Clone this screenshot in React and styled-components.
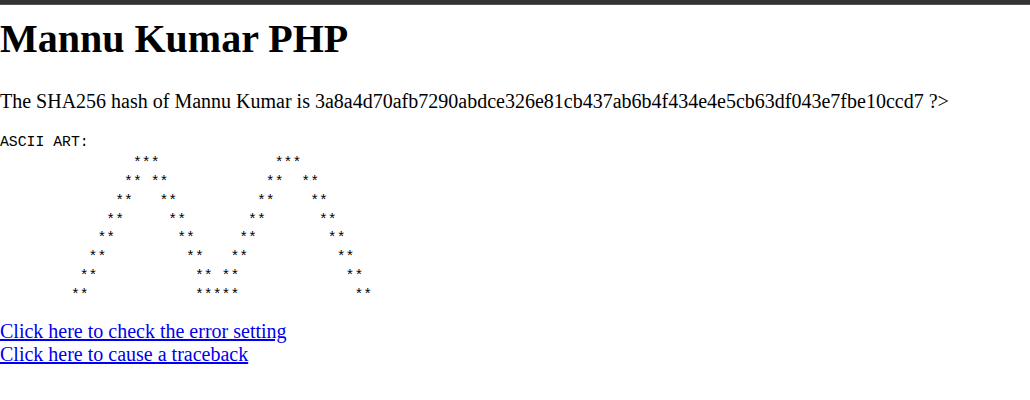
import React from 'react';
import styled, { createGlobalStyle } from 'styled-components';

const GlobalStyle = createGlobalStyle`
  body {
    margin: 0;
    background: #ffffff;
    color: #000000;
    font-family: "Liberation Serif", "Times New Roman", serif;
  }
`;

const TopBar = styled.div`
  height: 5px;
  background: #333333;
  border-bottom: 1px solid #555555;
  box-sizing: border-box;
`;

const Heading = styled.h1`
  margin: 12px 0 0;
  font-size: 40px;
  line-height: 44px;
  font-weight: bold;
`;

const Text = styled.p`
  margin: 29px 0 20px;
  font-size: 20px;
  line-height: 23px;
`;

const Art = styled.pre`
  margin: 20px 0 18px;
  font-family: "Liberation Mono", "Courier New", monospace;
  font-size: 14.77px;
  line-height: 18.8px;
`;

const ArtLabel = styled.span`
  display: block;
`;

const Stars = styled.span`
  display: block;
  padding-top: 2.5px;
  margin-bottom: -2.5px;
`;

const Links = styled.div`
  display: flex;
  flex-direction: column;
  align-items: flex-start;
  font-size: 20px;
  line-height: 23px;
`;

const Link = styled.a`
  color: #0000ee;
  text-decoration: underline;
`;

const sp = (n) => ' '.repeat(n);

const artRows = [
  sp(15) + '***' + sp(13) + '***',
  sp(14) + '**' + sp(1) + '**' + sp(11) + '**' + sp(2) + '**',
  sp(13) + '**' + sp(3) + '**' + sp(9) + '**' + sp(4) + '**',
  sp(12) + '**' + sp(5) + '**' + sp(7) + '**' + sp(6) + '**',
  sp(11) + '**' + sp(7) + '**' + sp(5) + '**' + sp(8) + '**',
  sp(10) + '**' + sp(9) + '**' + sp(3) + '**' + sp(10) + '**',
  sp(9) + '**' + sp(11) + '**' + sp(1) + '**' + sp(12) + '**',
  sp(8) + '**' + sp(12) + '*****' + sp(13) + '**',
];

export default function App() {
  const hash = '3a8a4d70afb7290abdce326e81cb437ab6b4f434e4e5cb63df043e7fbe10ccd7';

  return (
    <>
      <GlobalStyle />
      <TopBar />
      <Heading>Mannu Kumar PHP</Heading>
      <Text>
        The SHA256 hash of Mannu Kumar is {hash} ?&gt;
      </Text>
      <Art>
        <ArtLabel>ASCII ART:</ArtLabel>
        <Stars>{artRows.join('\n')}</Stars>
      </Art>
      <Links>
        <Link href="#">Click here to check the error setting</Link>
        <Link href="#">Click here to cause a traceback</Link>
      </Links>
    </>
  );
}
